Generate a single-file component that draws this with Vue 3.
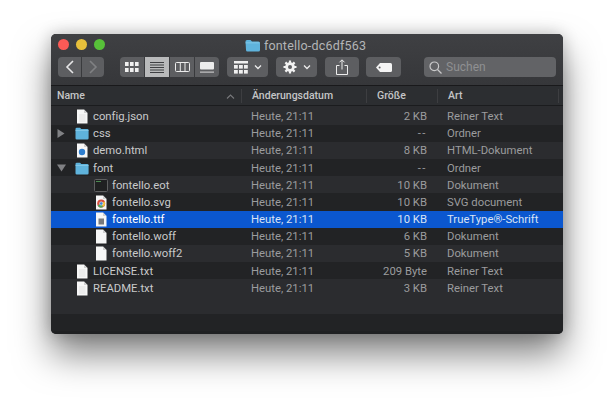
<template>
  <div class="page">
    <div class="window">
      <div class="top">
        <div class="titlebar">
          <div class="lights">
            <span class="light red"></span>
            <span class="light yellow"></span>
            <span class="light green"></span>
          </div>
          <div class="title">
            <svg class="title-folder" width="15" height="13" viewBox="0 0 15 13">
              <path d="M0.5 2.5q0-1.5 1.5-1.5h3.5l1.5 1.5h6.500q1.500 0 1.500 1.500v7q0 1.500-1.500 1.500h-11q-1.500 0-1.500-1.500z" fill="#5fb3dc" />
              <path d="M0.500 3.500h14v0.800h-14z" fill="#8ccdea" />
            </svg>
            fontello-dc6df563
          </div>
        </div>
        <div class="toolbar">
          <div class="btn-pair">
            <button class="tbtn nav">
              <svg width="10" height="14" viewBox="0 0 10 14"><path d="M8 1L2 7l6 6" fill="none" stroke="#e6e6e7" stroke-width="1.600" /></svg>
            </button>
            <button class="tbtn nav">
              <svg width="10" height="14" viewBox="0 0 10 14"><path d="M2 1l6 6-6 6" fill="none" stroke="#808184" stroke-width="1.600" /></svg>
            </button>
          </div>
          <div class="views">
            <button class="view">
              <svg width="14" height="10" viewBox="0 0 14 10" fill="#f0f0f0">
                <rect x="0" y="0" width="3.600" height="4" /><rect x="5" y="0" width="3.600" height="4" /><rect x="10" y="0" width="3.600" height="4" />
                <rect x="0" y="6" width="3.600" height="4" /><rect x="5" y="6" width="3.600" height="4" /><rect x="10" y="6" width="3.600" height="4" />
              </svg>
            </button>
            <button class="view active">
              <svg width="14" height="11" viewBox="0 0 14 11" fill="#3f4043">
                <rect y="0" width="14" height="1" /><rect y="2.500" width="14" height="1" /><rect y="5" width="14" height="1" /><rect y="7.500" width="14" height="1" /><rect y="10" width="14" height="1" />
              </svg>
            </button>
            <button class="view">
              <svg width="15" height="10" viewBox="0 0 15 10" fill="none" stroke="#ececec">
                <rect x="0.500" y="0.500" width="14" height="9" rx="1" /><path d="M5.300 0.500v9M10 0.500v9" />
              </svg>
            </button>
            <button class="view">
              <svg width="14" height="11" viewBox="0 0 14 11" fill="#ececec">
                <rect x="0" y="0" width="14" height="7.500" rx="1" />
                <path d="M0 9.500h14v1.200h-14z" opacity="0.700" />
              </svg>
            </button>
          </div>
          <button class="tbtn menu group">
            <svg width="14" height="13" viewBox="0 0 14 13" fill="#f0f0f0">
              <rect x="0" y="0" width="14" height="2.500" />
              <rect x="0" y="4" width="3.800" height="3.600" /><rect x="5" y="4" width="3.800" height="3.600" /><rect x="10" y="4" width="3.800" height="3.600" />
              <rect x="0" y="9" width="3.800" height="3.600" /><rect x="5" y="9" width="3.800" height="3.600" /><rect x="10" y="9" width="3.800" height="3.600" />
            </svg>
            <svg width="8" height="6" viewBox="0 0 8 6"><path d="M1 1.500l3 3 3-3" fill="none" stroke="#ececec" stroke-width="1.300" /></svg>
          </button>
          <button class="tbtn menu gear">
            <svg width="14" height="14" viewBox="0 0 14 14">
              <circle cx="7" cy="7" r="4.800" fill="#f2f2f2" />
              <path d="M7 0.500v13M0.500 7h13M2.400 2.400l9.200 9.200M11.600 2.400l-9.200 9.200" stroke="#f2f2f2" stroke-width="2.200" />
              <circle cx="7" cy="7" r="2" fill="#5d5e61" />
            </svg>
            <svg width="8" height="6" viewBox="0 0 8 6"><path d="M1 1.500l3 3 3-3" fill="none" stroke="#ececec" stroke-width="1.300" /></svg>
          </button>
          <button class="tbtn share">
            <svg width="12" height="16" viewBox="0 0 12 16" fill="none" stroke="#ececec">
              <path d="M3.500 6.500h-3v9h11v-9h-3" />
              <path d="M6 10.500v-9.500M3.500 3.300L6 0.800l2.500 2.500" />
            </svg>
          </button>
          <button class="tbtn tag">
            <svg width="16" height="9" viewBox="0 0 16 9">
              <path d="M4 0h10.500q1.500 0 1.500 1.500v6q0 1.500-1.500 1.500h-10.500l-4-4.500z" fill="#f4f4f4" />
              <circle cx="3.600" cy="4.500" r="1" fill="#5d5e61" />
            </svg>
          </button>
          <div class="search">
            <svg width="13" height="13" viewBox="0 0 13 13" fill="none" stroke="#c9c9ca" stroke-width="1.200">
              <circle cx="5.300" cy="5.300" r="4.300" /><path d="M8.500 8.500l4 4" />
            </svg>
            <span>Suchen</span>
          </div>
        </div>
      </div>

      <div class="header">
        <div class="col col-name">Name
          <svg width="9" height="5" viewBox="0 0 9 5"><path d="M1 4.500l3.500-3.500 3.500 3.500" fill="none" stroke="#77787b" stroke-width="1.100" /></svg>
        </div>
        <div class="col col-date">Änderungsdatum</div>
        <div class="col col-size">Größe</div>
        <div class="col col-kind">Art</div>
      </div>

      <div class="list">
        <div v-for="(f, i) in files" :key="i" class="row" :class="{ odd: i % 2 === 1, selected: f.selected }">
          <div class="cell-name" :class="{ nested: f.nested }">
            <span class="arrow">
              <svg v-if="f.arrow === 'right'" width="8" height="9" viewBox="0 0 8 9"><path d="M0.500 0l7 4.500-7 4.500z" fill="#808184" /></svg>
              <svg v-if="f.arrow === 'down'" width="9" height="8" viewBox="0 0 9 8"><path d="M0 0.500h9l-4.500 7z" fill="#808184" /></svg>
            </span>
            <svg class="icon" width="14" height="15" viewBox="0 0 14 15">
              <template v-if="f.icon === 'folder'">
                <path d="M0.500 3q0-1.300 1.300-1.300h3.200l1.300 1.300h6q1.300 0 1.300 1.300v7.900q0 1.300-1.300 1.300h-10.500q-1.300 0-1.300-1.300z" fill="#5fb3dc" />
                <path d="M0.500 4h13v0.700h-13z" fill="#8ccdea" />
              </template>
              <template v-else-if="f.icon === 'term'">
                <rect x="0.500" y="1.500" width="13" height="12" rx="1" fill="#1f2021" stroke="#5e5f60" />
                <rect x="2" y="3" width="5" height="1" fill="#4b8a52" />
              </template>
              <template v-else>
                <path d="M2 0.500h7l3.500 3.500v10.500h-10.500z" fill="#f7f7f7" />
                <path d="M9 0.500v3.500h3.500z" fill="#cfcfcf" />
                <path v-if="f.icon === 'text'" d="M4 6h6.500M4 8h6.500M4 10h6.500M4 12h6.500" stroke="#dcdcdc" stroke-width="0.800" />
                <circle v-if="f.icon === 'html'" cx="7" cy="9" r="3.200" fill="#2f7fd0" />
                <template v-if="f.icon === 'chrome'">
                  <circle cx="7.200" cy="8.500" r="4" fill="#d9503f" />
                  <path d="M7.200 8.500l-3.500 2a4 4 0 0 0 5.500 1.400z" fill="#4ba55a" />
                  <path d="M7.200 8.500l2 3.400a4 4 0 0 0 1.900-3.400 4 4 0 0 0-.5-2z" fill="#efc340" />
                  <circle cx="7.200" cy="8.500" r="1.700" fill="#4285d6" stroke="#fff" stroke-width="0.500" />
                </template>
                <rect v-if="f.icon === 'font'" x="4.500" y="6.500" width="5.500" height="6" fill="#77797d" />
              </template>
            </svg>
            <span class="fname">{{ f.name }}</span>
          </div>
          <div class="cell-date">Heute, 21:11</div>
          <div class="cell-size" :class="{ empty: f.size === '--' }">{{ f.size }}</div>
          <div class="cell-kind">{{ f.kind }}</div>
        </div>
        <div class="row"></div>
        <div class="row odd"></div>
        <div class="row last"></div>
      </div>
    </div>
  </div>
</template>

<script setup>
const files = [
  { name: 'config.json', size: '2 KB', kind: 'Reiner Text', icon: 'text' },
  { name: 'css', size: '--', kind: 'Ordner', icon: 'folder', arrow: 'right' },
  { name: 'demo.html', size: '8 KB', kind: 'HTML-Dokument', icon: 'html' },
  { name: 'font', size: '--', kind: 'Ordner', icon: 'folder', arrow: 'down' },
  { name: 'fontello.eot', size: '10 KB', kind: 'Dokument', icon: 'term', nested: true },
  { name: 'fontello.svg', size: '10 KB', kind: 'SVG document', icon: 'chrome', nested: true },
  { name: 'fontello.ttf', size: '10 KB', kind: 'TrueType®-Schrift', icon: 'font', nested: true, selected: true },
  { name: 'fontello.woff', size: '6 KB', kind: 'Dokument', icon: 'doc', nested: true },
  { name: 'fontello.woff2', size: '5 KB', kind: 'Dokument', icon: 'doc', nested: true },
  { name: 'LICENSE.txt', size: '209 Byte', kind: 'Reiner Text', icon: 'text' },
  { name: 'README.txt', size: '3 KB', kind: 'Reiner Text', icon: 'text' },
];
</script>

<style>
html, body {
  margin: 0;
  background: #fff;
}
</style>

<style scoped>
.page {
  width: 614px;
  height: 401px;
  padding: 34px 51px 0;
  box-sizing: border-box;
  overflow: hidden;
  font-family: Roboto, "Liberation Sans", sans-serif;
  font-variant-ligatures: none;
}

.window {
  width: 512px;
  height: 300px;
  border-radius: 5px;
  overflow: hidden;
  background: #2b2c2f;
  box-shadow: 0 20px 36px rgba(0, 0, 0, 0.5), 0 0 16px rgba(0, 0, 0, 0.22);
}

.top {
  height: 51px;
  background: linear-gradient(#3f4043, #36373a);
  border-bottom: 1px solid #19191b;
}

.titlebar {
  position: relative;
  height: 22px;
  display: flex;
  align-items: center;
  justify-content: center;
  padding-right: 3px;
}

.lights {
  position: absolute;
  left: 7px;
  top: 5px;
  display: flex;
  gap: 7px;
}

.light {
  width: 11px;
  height: 11px;
  border-radius: 50%;
}
.red { background: #fb5a56; }
.yellow { background: #e6bf3b; }
.green { background: #57c139; }

.title {
  display: flex;
  align-items: center;
  gap: 4px;
  font-size: 12.500px;
  color: #b4b5b7;
  letter-spacing: 0.200px;
  padding-top: 1px;
}

.toolbar {
  display: flex;
  align-items: flex-start;
  padding: 1px 0 0 7px;
}

button {
  border: none;
  padding: 0;
  margin: 0;
  display: flex;
  align-items: center;
  justify-content: center;
}

.tbtn {
  height: 20px;
  background: #5d5e61;
  border-radius: 4px;
}

.btn-pair {
  display: flex;
  gap: 1px;
  margin-right: 16px;
}

.nav {
  width: 22px;
}
.btn-pair .nav:first-child { border-radius: 4px 0 0 4px; width: 23px; }
.btn-pair .nav:last-child { border-radius: 0 4px 4px 0; }

.views {
  display: flex;
  gap: 1px;
  border-radius: 4px;
  overflow: hidden;
  margin-right: 8px;
}

.view {
  width: 24px;
  height: 20px;
  background: #5d5e61;
}

.view.active {
  background: #b9babb;
}

.menu {
  width: 41px;
  gap: 6px;
  margin-right: 8px;
}

.share {
  width: 34px;
  margin-right: 7px;
}

.tag {
  width: 35px;
  margin-right: 23px;
}

.search {
  width: 132px;
  height: 20px;
  background: #626366;
  border-radius: 4px;
  display: flex;
  align-items: center;
  gap: 4px;
  padding-left: 5px;
  box-sizing: border-box;
  font-size: 12px;
  color: #8f9092;
}

.header {
  height: 20px;
  display: flex;
  align-items: center;
  background: #2c2e31;
  border-bottom: 1px solid #1b1c1e;
  font-size: 10.500px;
  font-weight: 500;
  color: #c4c5c6;
  box-sizing: border-box;
  margin-bottom: 1.400px;
}

.col {
  height: 14px;
  line-height: 14px;
  box-sizing: border-box;
  border-right: 1px solid #3d3e41;
  padding-left: 10px;
  flex: none;
}
.col-name {
  width: 191px;
  padding-left: 6px;
  position: relative;
}
.col-name svg {
  position: absolute;
  right: 6px;
  top: 5px;
}
.col-date { width: 125px; }
.col-size { width: 71px; }
.col-kind { width: 121px; }

.row {
  height: 17.200px;
  box-sizing: border-box;
  padding-top: 1px;
  display: grid;
  grid-template-columns: 200px 116px 60px 1fr;
  align-items: center;
  font-size: 11.300px;
  background: #2b2c2f;
  color: #9b9c9e;
}

.row.odd {
  background: #222325;
}

.row.last {
  height: 4px;
  background: #1f2022;
}

.row.selected {
  background: #0b57cf;
  color: #d9e3f5;
}

.cell-name {
  display: flex;
  align-items: center;
  height: 15px;
  padding-left: 6px;
  color: #c9cacb;
  white-space: nowrap;
}

.selected .cell-name {
  color: #fff;
}

.cell-name.nested .icon {
  margin-left: 19px;
}

.arrow {
  width: 18px;
  display: flex;
  align-items: center;
}

.icon {
  margin-right: 4px;
  flex: none;
}

.cell-size {
  text-align: right;
}

.cell-size.empty {
  letter-spacing: 1.500px;
}

.cell-kind {
  padding-left: 20px;
  white-space: nowrap;
}
</style>
